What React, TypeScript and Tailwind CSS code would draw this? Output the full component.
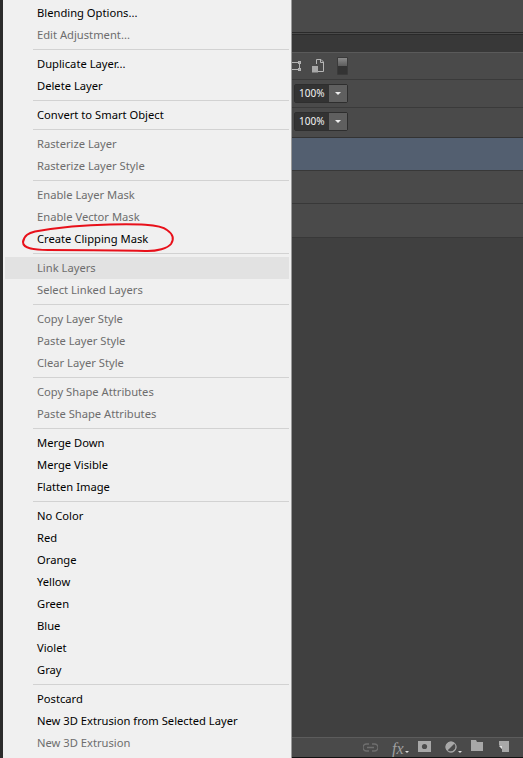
const groups: { label: string; off?: boolean; hover?: boolean }[][] = [
  [{ label: "Blending Options..." }, { label: "Edit Adjustment...", off: true }],
  [{ label: "Duplicate Layer..." }, { label: "Delete Layer" }],
  [{ label: "Convert to Smart Object" }],
  [{ label: "Rasterize Layer", off: true }, { label: "Rasterize Layer Style", off: true }],
  [
    { label: "Enable Layer Mask", off: true },
    { label: "Enable Vector Mask", off: true },
    { label: "Create Clipping Mask" },
  ],
  [{ label: "Link Layers", off: true, hover: true }, { label: "Select Linked Layers", off: true }],
  [
    { label: "Copy Layer Style", off: true },
    { label: "Paste Layer Style", off: true },
    { label: "Clear Layer Style", off: true },
  ],
  [{ label: "Copy Shape Attributes", off: true }, { label: "Paste Shape Attributes", off: true }],
  [{ label: "Merge Down" }, { label: "Merge Visible" }, { label: "Flatten Image" }],
  [
    { label: "No Color" },
    { label: "Red" },
    { label: "Orange" },
    { label: "Yellow" },
    { label: "Green" },
    { label: "Blue" },
    { label: "Violet" },
    { label: "Gray" },
  ],
  [
    { label: "Postcard" },
    { label: "New 3D Extrusion from Selected Layer" },
    { label: "New 3D Extrusion", off: true },
  ],
];

function Percent() {
  return (
    <div className="ml-[2px] flex h-[19px] w-[54px] rounded-[2px] border border-[#2e2e2e]">
      <div className="flex w-[34px] items-center bg-[#333333] pl-[4px] text-[10px] text-[#f4f4f4]">100%</div>
      <div className="flex flex-1 items-center justify-center bg-[#5f5f5f]">
        <div className="h-0 w-0 border-x-[3px] border-t-[3px] border-x-transparent border-t-[#eeeeee]" />
      </div>
    </div>
  );
}

function Caret() {
  return <div className="mt-[11px] ml-[1px] h-0 w-0 border-x-[2px] border-t-[2px] border-x-transparent border-t-[#dddddd]" />;
}

export default function App() {
  return (
    <div
      className="relative flex h-[758px] w-[523px] overflow-hidden bg-[#404040]"
      style={{ fontFamily: '"Noto Sans", sans-serif' }}
    >
      <div className="w-[3px] bg-[#2c2c2c]" />

      <div className="w-[288px] bg-[#f0f0f0] pt-[2px] text-[11.2px] leading-[22px]">
        {groups.map((rows, i) => (
          <div key={i}>
            {i > 0 && (
              <div className="py-[3px] pl-[30px] pr-[2px]">
                <div className="h-px bg-[#d2d2d2]" />
              </div>
            )}
            {rows.map((r) => (
              <div
                key={r.label}
                className={`h-[22px] pl-[34px] ${r.off ? "text-[#6d6d6d]" : "text-[#000000]"} ${
                  r.hover ? "ml-[2px] mr-[2px] !pl-[32px] bg-[#e2e2e2]" : ""
                }`}
              >
                {r.label}
              </div>
            ))}
          </div>
        ))}
      </div>

      <div className="flex w-[232px] flex-col border-l border-[#9a9a9a] bg-[#404040]">
        <div className="h-[32px] bg-[#4a4a4a]" />
        <div className="h-[3px] border-y border-[#2a2a2a] bg-[#4a4a4a]" />
        <div className="h-[17px] bg-[#383838]" />
        <div className="flex h-[28px] items-center border-y border-[#5a5a5a] border-b-[#3a3a3a] bg-[#4a4a4a]">
          <svg width="9" height="12" viewBox="0 0 9 12" fill="none" className="shrink-0">
            <path d="M0 2.500H7.500V9.500H0" stroke="#b5b5b5" />
            <rect x="6.500" y="1.500" width="2" height="2" stroke="#b5b5b5" />
            <rect x="6.500" y="8.500" width="2" height="2" stroke="#b5b5b5" />
          </svg>
          <svg width="12" height="14" viewBox="0 0 12 14" fill="none" className="ml-[11px] shrink-0">
            <path d="M4.500 5V.5H9L11.500 3V12.500H6" stroke="#b5b5b5" />
            <path d="M8.500 .5V3.500H11.500" stroke="#b5b5b5" />
            <rect x="0" y="7" width="6" height="6.500" fill="#a8a8a8" />
          </svg>
          <div className="ml-[13px] flex h-[18px] w-[11px] flex-col rounded-[1px] border border-[#3a3a3a] bg-[#333333]">
            <div className="h-[8px] bg-gradient-to-b from-[#8a8a8a] to-[#5c5c5c]" />
          </div>
        </div>
        <div className="flex h-[28px] items-center border-b border-[#3a3a3a] bg-[#4a4a4a]">
          <Percent />
        </div>
        <div className="flex h-[30px] items-start border-b border-[#333333] bg-[#4a4a4a] pt-[4px]">
          <Percent />
        </div>
        <div className="h-[33px] border-b border-[#383838] bg-[#535f70]" />
        <div className="h-[33px] border-b border-[#383838] bg-[#4a4a4a]" />
        <div className="h-[34px] border-b border-[#383838] bg-[#4a4a4a]" />
        <div className="flex-1 bg-[#404040]" />
        <div className="flex h-[20px] items-start border-t border-[#5c5c5c] bg-[#4a4a4a] pl-[71px] pt-[2px]">
          <svg width="15" height="9" viewBox="0 0 15 9" fill="none" className="mt-[3px] shrink-0">
            <path d="M6 1H3.500a3.500 3.500 0 0 0 0 7H6M9 1h2.500a3.500 3.500 0 0 1 0 7H9M4 4.500h7" stroke="#6f6f6f" strokeWidth="1.400" />
          </svg>
          <span
            className="ml-[14px] text-[16px] leading-[17px] italic text-[#a0a0a0]"
            style={{ fontFamily: '"Liberation Serif", serif' }}
          >
            fx
          </span>
          <Caret />
          <svg width="13" height="11" viewBox="0 0 13 11" className="ml-[9px] mt-[1px] shrink-0">
            <rect width="13" height="11" fill="#a8a8a8" />
            <circle cx="6.500" cy="5.500" r="2.600" fill="#4c4c4c" />
          </svg>
          <svg width="12" height="12" viewBox="0 0 12 12" className="ml-[14px] mt-[1px] shrink-0">
            <circle cx="6" cy="6" r="5.500" fill="#a8a8a8" />
            <path d="M2.200 9.800 9.800 2.200A5.500 5.500 0 0 1 2.200 9.800Z" fill="#4c4c4c" />
            <circle cx="6" cy="6" r="5" fill="none" stroke="#a8a8a8" />
          </svg>
          <Caret />
          <svg width="12" height="11" viewBox="0 0 12 11" className="ml-[9px] shrink-0">
            <path d="M0 0H5L6 2H12V11H0Z" fill="#a8a8a8" />
          </svg>
          <svg width="10" height="11" viewBox="0 0 10 11" className="ml-[16px] mt-[1px] shrink-0">
            <path d="M0 0H10V11H3V8L0 4Z" fill="#a8a8a8" />
            <path d="M0 5H3V8Z" fill="#e0e0e0" />
          </svg>
        </div>
        <div className="h-px bg-[#111111]" />
      </div>

      <svg width="175" height="35" viewBox="0 0 175 35" fill="none" className="absolute left-[20px] top-[222px]">
        <path
          d="M3 20C4 13 9 11 15 9.500C35 6 60 3 90 2.500C115 2 140 2 147 8C153 12 154.500 17 151 22C148 26 137 29.500 125 29C95 28 60 28 28 28C15 28 3 27 3 20Z"
          stroke="#e8101a"
          strokeWidth="2"
        />
      </svg>
    </div>
  );
}
